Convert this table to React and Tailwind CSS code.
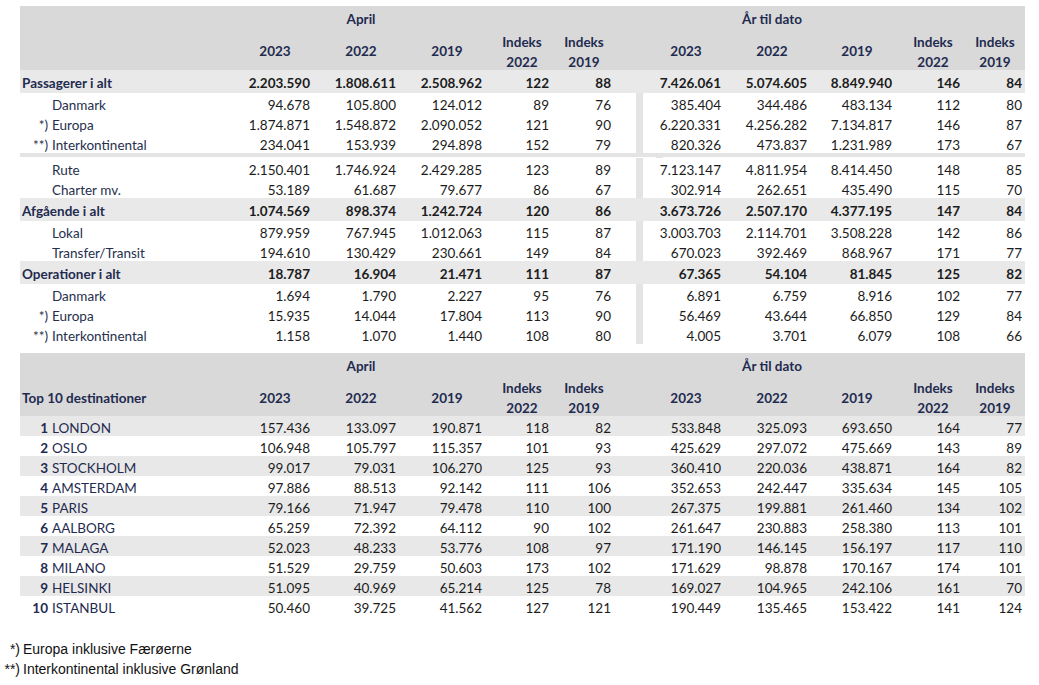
import React from "react";

const LEFT = ["w-[70px]", "w-[86px] pl-4", "w-[86px] pl-4", "w-[67px] pl-[13px]", "w-[62px] pl-2"];
const RIGHT = ["w-[78px] pl-2", "w-[86px] pl-4", "w-[85px] pl-[15px]", "w-[68px] pl-[14px]", "w-[62px] pl-2"];

const top = [
  { kind: "bold", label: "Passagerer i alt", v: ["2.203.590", "1.808.611", "2.508.962", "122", "88", "7.426.061", "5.074.605", "8.849.940", "146", "84"] },
  { label: "Danmark", v: ["94.678", "105.800", "124.012", "89", "76", "385.404", "344.486", "483.134", "112", "80"] },
  { pre: "*)", label: "Europa", v: ["1.874.871", "1.548.872", "2.090.052", "121", "90", "6.220.331", "4.256.282", "7.134.817", "146", "87"] },
  { pre: "**)", label: "Interkontinental", v: ["234.041", "153.939", "294.898", "152", "79", "820.326", "473.837", "1.231.989", "173", "67"] },
  { kind: "sep" },
  { label: "Rute", v: ["2.150.401", "1.746.924", "2.429.285", "123", "89", "7.123.147", "4.811.954", "8.414.450", "148", "85"] },
  { label: "Charter mv.", v: ["53.189", "61.687", "79.677", "86", "67", "302.914", "262.651", "435.490", "115", "70"] },
  { kind: "bold", label: "Afgående i alt", v: ["1.074.569", "898.374", "1.242.724", "120", "86", "3.673.726", "2.507.170", "4.377.195", "147", "84"] },
  { label: "Lokal", v: ["879.959", "767.945", "1.012.063", "115", "87", "3.003.703", "2.114.701", "3.508.228", "142", "86"] },
  { label: "Transfer/Transit", v: ["194.610", "130.429", "230.661", "149", "84", "670.023", "392.469", "868.967", "171", "77"] },
  { kind: "bold", label: "Operationer i alt", v: ["18.787", "16.904", "21.471", "111", "87", "67.365", "54.104", "81.845", "125", "82"] },
  { label: "Danmark", v: ["1.694", "1.790", "2.227", "95", "76", "6.891", "6.759", "8.916", "102", "77"] },
  { pre: "*)", label: "Europa", v: ["15.935", "14.044", "17.804", "113", "90", "56.469", "43.644", "66.850", "129", "84"] },
  { pre: "**)", label: "Interkontinental", v: ["1.158", "1.070", "1.440", "108", "80", "4.005", "3.701", "6.079", "108", "66"] },
];

const destinations = [
  ["LONDON", "157.436", "133.097", "190.871", "118", "82", "533.848", "325.093", "693.650", "164", "77"],
  ["OSLO", "106.948", "105.797", "115.357", "101", "93", "425.629", "297.072", "475.669", "143", "89"],
  ["STOCKHOLM", "99.017", "79.031", "106.270", "125", "93", "360.410", "220.036", "438.871", "164", "82"],
  ["AMSTERDAM", "97.886", "88.513", "92.142", "111", "106", "352.653", "242.447", "335.634", "145", "105"],
  ["PARIS", "79.166", "71.947", "79.478", "110", "100", "267.375", "199.881", "261.460", "134", "102"],
  ["AALBORG", "65.259", "72.392", "64.112", "90", "102", "261.647", "230.883", "258.380", "113", "101"],
  ["MALAGA", "52.023", "48.233", "53.776", "108", "97", "171.190", "146.145", "156.197", "117", "110"],
  ["MILANO", "51.529", "29.759", "50.603", "173", "102", "171.629", "98.878", "170.167", "174", "101"],
  ["HELSINKI", "51.095", "40.969", "65.214", "125", "78", "169.027", "104.965", "242.106", "161", "70"],
  ["ISTANBUL", "50.460", "39.725", "41.562", "127", "121", "190.449", "135.465", "153.422", "141", "124"],
];

function Cells({ v, bar, bold }) {
  return (
    <>
      {v.slice(0, 5).map((x, i) => (
        <div key={i} className={`${LEFT[i]} shrink-0 text-right`}>{x}</div>
      ))}
      <div className="w-[32px] shrink-0 self-stretch flex justify-end -mt-[4px]">
        <div className={`w-[7px] ${bar && !bold ? "bg-[#e4e4e4]" : ""}`} />
      </div>
      {v.slice(5).map((x, i) => (
        <div key={i} className={`${RIGHT[i]} shrink-0 text-right`}>{x}</div>
      ))}
      <div className="w-[3px] shrink-0" />
    </>
  );
}

function Header({ first }) {
  const years = ["2023", "2022", "2019"];
  return (
    <div className="bg-[#d9d9d9] text-[#1f2b50] font-bold">
      <div className="flex h-[24px] items-center pt-[2px]">
        <div className="w-[220px] shrink-0" />
        <div className={`${LEFT[0]} shrink-0`} />
        <div className={`${LEFT[1]} shrink-0 text-center`}>April</div>
        <div className="w-[247px] shrink-0" />
        <div className={`${RIGHT[0]} shrink-0`} />
        <div className={`${RIGHT[1]} shrink-0 text-center whitespace-nowrap`}>År til dato</div>
      </div>
      <div className={`flex items-center pt-[3px] ${first ? "h-[39px]" : "h-[40px]"}`}>
        <div className="w-[220px] shrink-0 pl-[2px]">{first}</div>
        {years.map((y, i) => (
          <div key={y} className={`${LEFT[i]} shrink-0 text-center`}>{y}</div>
        ))}
        <div className={`${LEFT[3]} shrink-0 text-center leading-[20px]`}>Indeks<br />2022</div>
        <div className={`${LEFT[4]} shrink-0 text-center leading-[20px]`}>Indeks<br />2019</div>
        <div className="w-[32px] shrink-0" />
        {years.map((y, i) => (
          <div key={y} className={`${RIGHT[i]} shrink-0 text-center`}>{y}</div>
        ))}
        <div className={`${RIGHT[3]} shrink-0 text-center leading-[20px]`}>Indeks<br />2022</div>
        <div className={`${RIGHT[4]} shrink-0 text-center leading-[20px]`}>Indeks<br />2019</div>
      </div>
    </div>
  );
}

export default function App() {
  return (
    <div className="w-[1039px] h-[685px] bg-white overflow-hidden text-[13.5px] text-[#1c1c1c]" style={{ fontFamily: "Lato, 'Open Sans', sans-serif" }}>
      <div className="ml-[20px] mt-[6px] w-[1005px]">
        <Header first={null} />
        {top.map((r, idx) => {
          if (r.kind === "sep") {
            return (
              <div key={idx} className="h-[5px] border-t-4 border-[#e4e4e4] flex">
                <div className="w-[611px]" />
                <div className="w-[7px] ml-[25px] bg-[#e4e4e4]" />
              </div>
            );
          }
          const bold = r.kind === "bold";
          return (
            <div key={idx} className={`flex items-center pt-[4px] ${bold ? "h-[23px] bg-[#e9e9e9] font-bold" : "h-[20px]"}`}>
              {bold ? (
                <div className="w-[220px] shrink-0 pl-[2px] text-[#1f2b50]">{r.label}</div>
              ) : (
                <div className="w-[220px] shrink-0 flex text-[#26304d]">
                  <span className="w-[28px] text-right">{r.pre}</span>
                  <span className="pl-[4px]">{r.label}</span>
                </div>
              )}
              <Cells v={r.v} bar bold={bold} />
            </div>
          );
        })}
      </div>

      <div className="ml-[20px] mt-[9px] w-[1005px]">
        <Header first="Top 10 destinationer" />
        {destinations.map((r, i) => (
          <div key={r[0]} className={`flex items-center h-[20px] pt-[5px] ${i % 2 === 0 ? "bg-[#e8e8e8]" : ""}`}>
            <div className="w-[220px] shrink-0 flex text-[#1f2b50]">
              <span className="w-[28px] text-right font-bold">{i + 1}</span>
              <span className="pl-[4px]">{r[0]}</span>
            </div>
            <Cells v={r.slice(1)} />
          </div>
        ))}
      </div>

      <div className="mt-[23px] text-[14px] text-[#111] leading-[20px]" style={{ fontFamily: "'Liberation Sans', Arial, sans-serif" }}>
        <div className="flex">
          <span className="w-[20px] text-right">*)</span>
          <span className="pl-[3px]">Europa inklusive Færøerne</span>
        </div>
        <div className="flex">
          <span className="w-[20px] text-right">**)</span>
          <span className="pl-[3px]">Interkontinental inklusive Grønland</span>
        </div>
      </div>
    </div>
  );
}
